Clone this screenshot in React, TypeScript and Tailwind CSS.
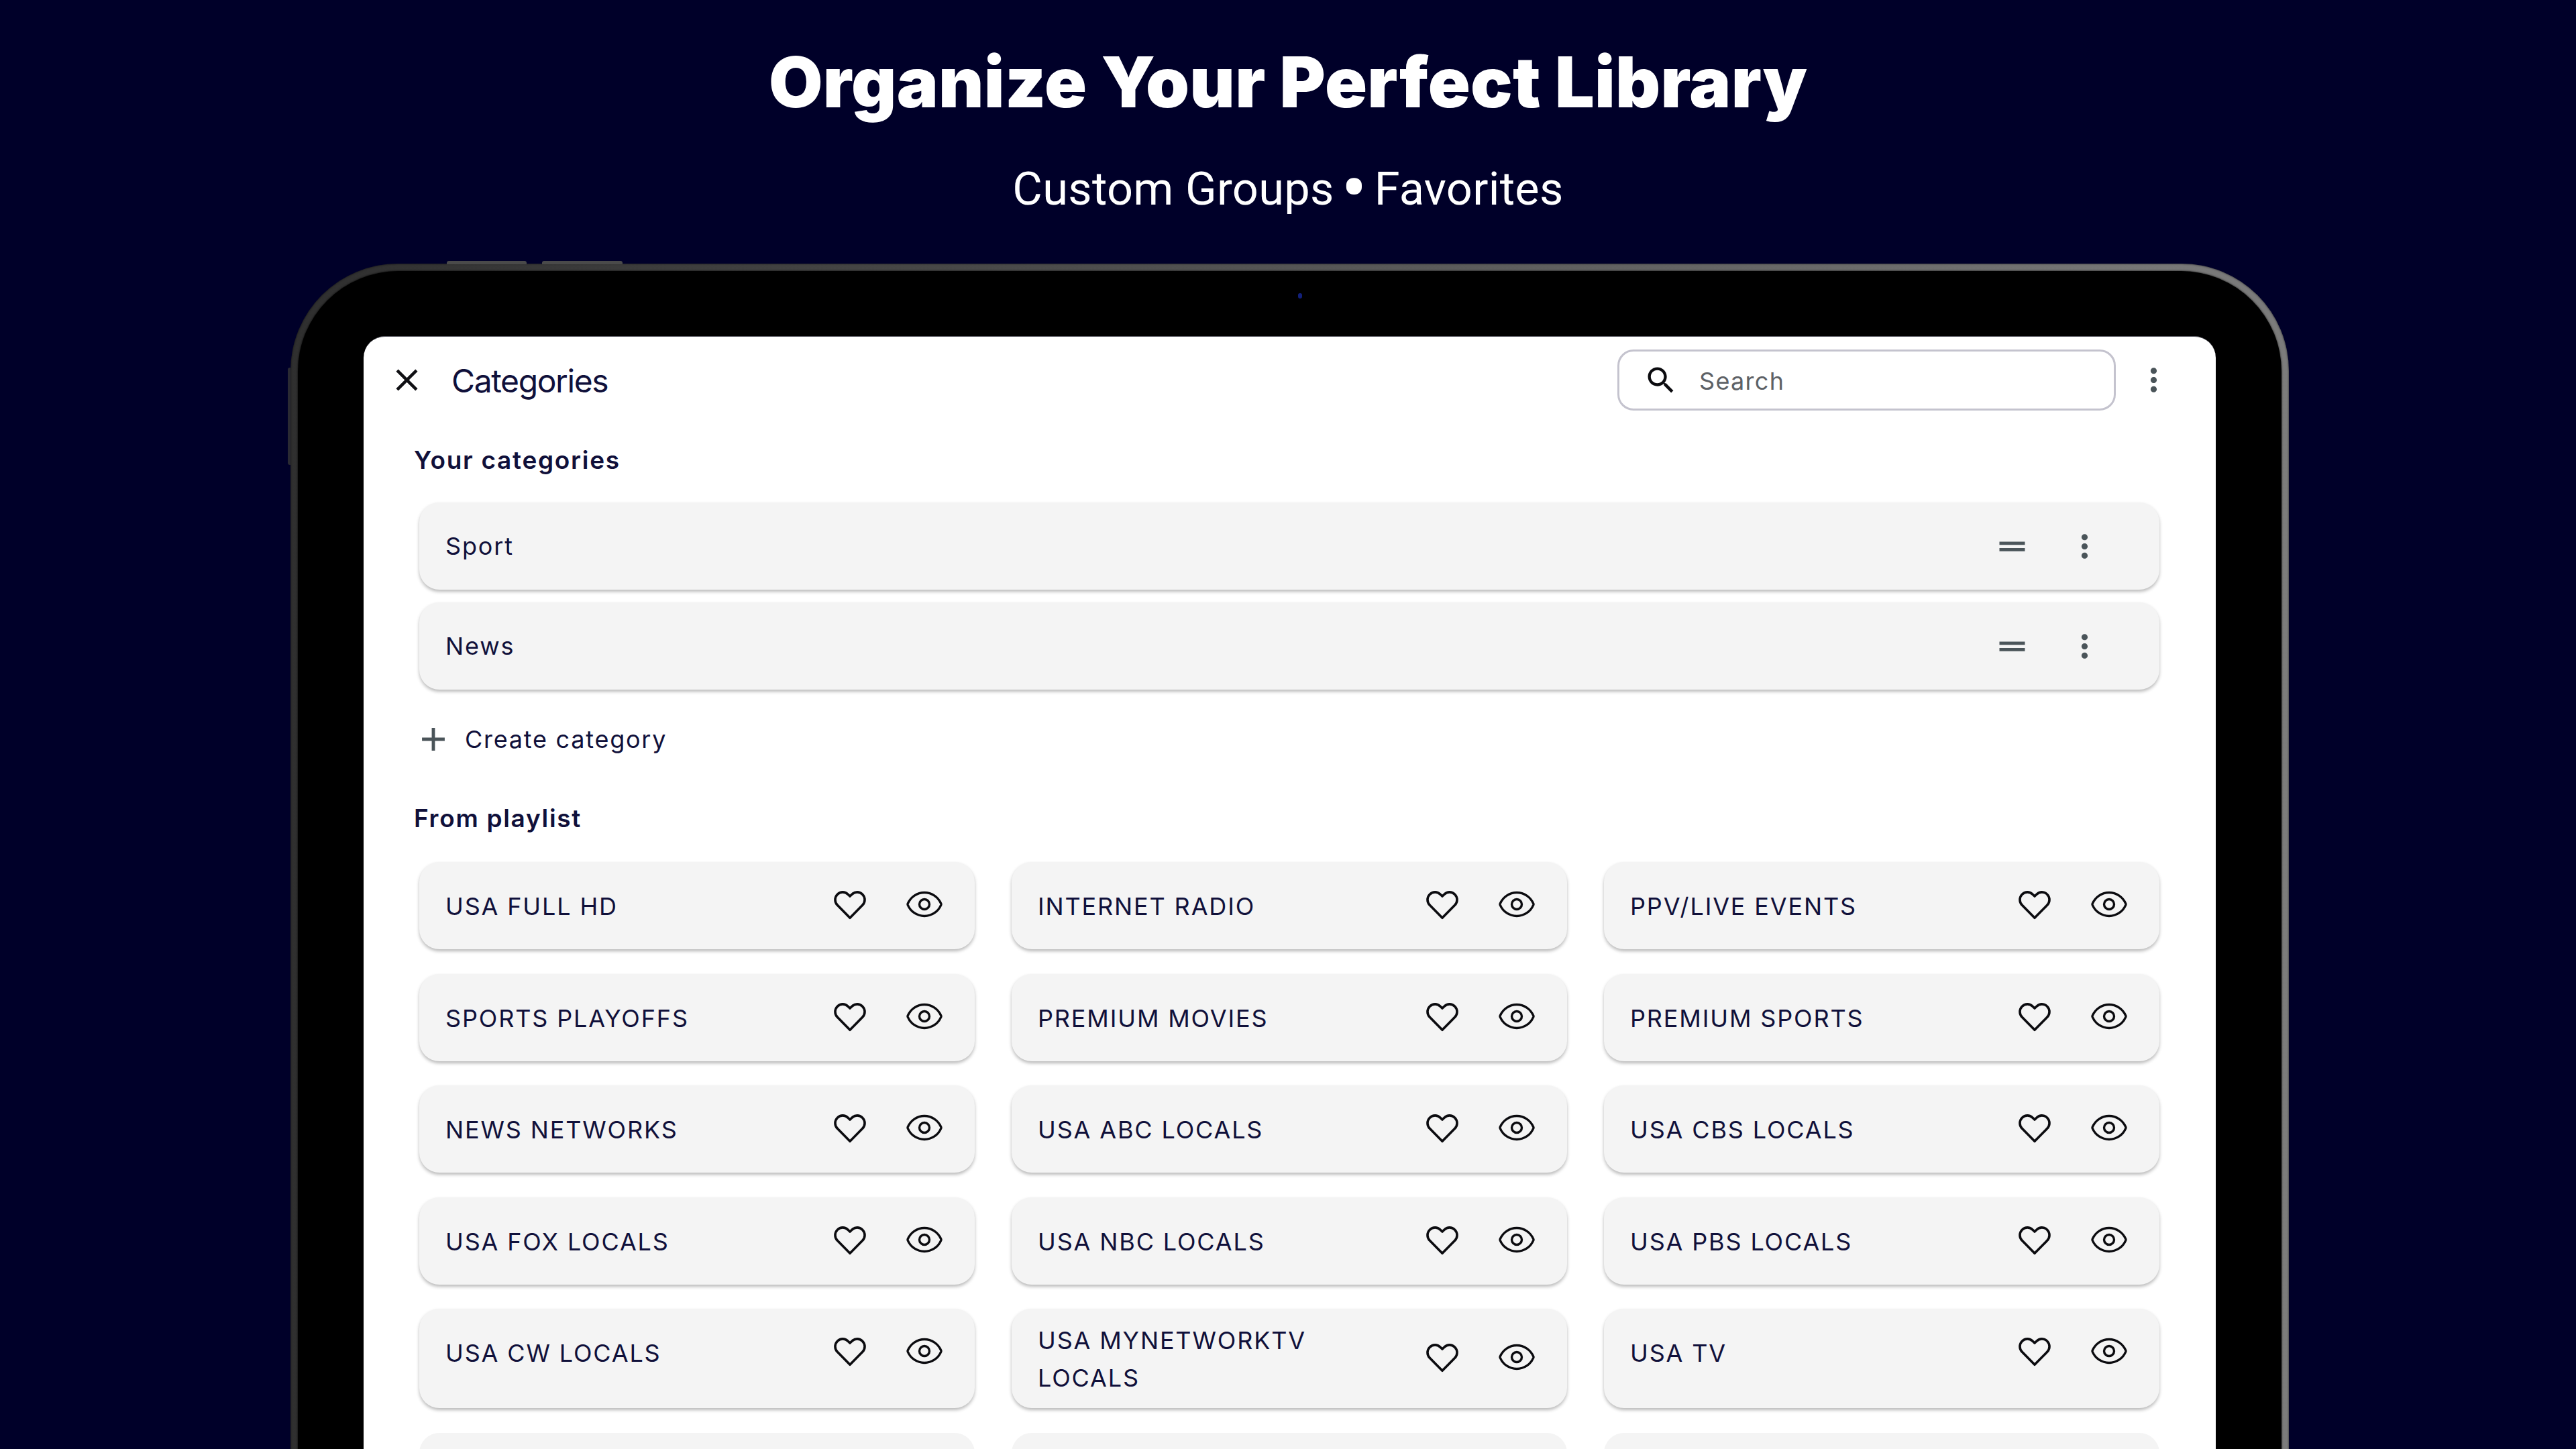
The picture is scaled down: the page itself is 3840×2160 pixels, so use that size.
import React from "react";

const rows = [
  ["USA FULL HD", "INTERNET RADIO", "PPV/LIVE EVENTS"],
  ["SPORTS PLAYOFFS", "PREMIUM MOVIES", "PREMIUM SPORTS"],
  ["NEWS NETWORKS", "USA ABC LOCALS", "USA CBS LOCALS"],
  ["USA FOX LOCALS", "USA NBC LOCALS", "USA PBS LOCALS"],
  ["USA CW LOCALS", "USA MYNETWORKTV LOCALS", "USA TV"],
];

const MoreVert = () => (
  <svg viewBox="0 0 24 24" className="w-[55px] h-[55px] fill-[#4a5459]">
    <path d="M12 8c1.1 0 2-.9 2-2s-.9-2-2-2-2 .9-2 2 .9 2 2 2zm0 2c-1.1 0-2 .9-2 2s.9 2 2 2 2-.9 2-2-.9-2-2-2zm0 6c-1.1 0-2 .9-2 2s.9 2 2 2 2-.9 2-2-.9-2-2-2z" />
  </svg>
);

const Heart = () => (
  <svg viewBox="0 0 24 24" className="w-[54px] h-[54px] -mt-[4px] fill-none stroke-[#0b0b0f] stroke-[1.6]" strokeLinejoin="round">
    <path d="M12 21 3.7 12.6a5.1 5.1 0 0 1 0-7.2 4.9 4.9 0 0 1 7 0L12 6.7l1.3-1.3a4.9 4.9 0 0 1 7 0 5.1 5.1 0 0 1 0 7.2Z" />
  </svg>
);

const Eye = () => (
  <svg viewBox="0 0 24 24" className="w-[60px] h-[60px] -mt-[4px] fill-none stroke-[#0b0b0f] stroke-[1.35]">
    <path d="M2.062 12.348a1 1 0 0 1 0-.696 10.75 10.75 0 0 1 19.876 0 1 1 0 0 1 0 .696 10.75 10.75 0 0 1-19.876 0" />
    <circle cx="12" cy="12" r="3" />
  </svg>
);

const UserRow = ({ name }: { name: string }) => (
  <div className="h-[130px] bg-[#f4f4f4] rounded-[30px] shadow-[0_3px_5px_rgba(0,0,0,0.28)] flex items-center pl-[39px] pr-[84px]">
    <span className="flex-1 text-[36px] leading-[48px] tracking-[1.85px] text-[#10103a]">{name}</span>
    <svg viewBox="0 0 24 24" className="w-[57px] h-[57px] fill-[#4a5459] mr-[52px]">
      <path d="M20 9H4v2h16V9zM4 15h16v-2H4v2z" />
    </svg>
    <MoreVert />
  </div>
);

const PlaylistCard = ({ name }: { name: string }) => {
  const tall = name.length > 20;
  return (
    <div className="bg-[#f4f4f4] rounded-[30px] shadow-[0_3px_5px_rgba(0,0,0,0.28)] flex items-start pl-[39px] pr-[45px]">
      <div className={tall ? "flex items-center flex-1 h-[148px]" : "flex items-center flex-1 h-[130px]"}>
        <span className="flex-1 mt-[2px] text-[36px] leading-[56px] tracking-[1.85px] text-[#10103a] pr-[120px]">{name}</span>
        <Heart />
        <span className="w-[54px]" />
        <Eye />
      </div>
    </div>
  );
};

export default function App() {
  return (
    <div className="w-[3840px] h-[2160px] overflow-hidden bg-[#000029] font-['Inter',sans-serif]">
      {/* headline */}
      <div className="pt-[60px] flex flex-col items-center">
        <h1 className="text-[104px] leading-[124px] font-black tracking-[0.3px] text-white">Organize Your Perfect Library</h1>
        <p className="mt-[58px] text-[68.5px] leading-[80px] tracking-[0.3px] text-white font-['Roboto',sans-serif]">
          Custom Groups <span className="relative top-[16px] -mx-[7px] text-[116px] leading-[0]">•</span> Favorites
        </p>
      </div>

      {/* tablet */}
      <div className="relative mt-[71px] ml-[433px] w-[2979px] rounded-t-[160px] p-[11px] pb-0 bg-gradient-to-r from-[#2f2f2f] via-[#555555] to-[#7c7c7c] shadow-[inset_0_0_3px_rgba(0,0,0,0.7)]">
        <span className="absolute top-[-4px] left-[233px] w-[119px] h-[5px] rounded-t-[3px] bg-[#4a4a4a]" />
        <span className="absolute top-[-4px] left-[375px] w-[120px] h-[5px] rounded-t-[3px] bg-[#4a4a4a]" />
        <span className="absolute top-[155px] left-[-4px] w-[4px] h-[145px] rounded-l-[3px] bg-[#2a2a33]" />

        <div className="relative bg-black rounded-t-[150px] px-[98px] pt-[97px] shadow-[0_0_3px_rgba(0,0,0,0.9)]">
          <span className="absolute top-[33px] left-[1491px] w-[6px] h-[8px] rounded-full bg-[#12207a]" />

          {/* screen */}
          <div className="bg-white rounded-t-[32px] pt-[19px] pb-[60px] border-t border-[#55555f]">
            {/* top bar */}
            <div className="flex items-center h-[91px] pl-[37px] pr-[65px]">
              <svg viewBox="0 0 24 24" className="w-[55px] h-[55px] fill-[#101014]">
                <path d="M19 6.41L17.59 5 12 10.59 6.41 5 5 6.41 10.59 12 5 17.59 6.41 19 12 13.41 17.59 19 19 17.59 13.41 12z" />
              </svg>
              <span className="ml-[39px] mt-[2px] flex-1 text-[48px] tracking-[-1.4px] text-[#10103a]">Categories</span>
              <div className="w-[743px] h-[91px] border-[3px] border-[#c4c3ce] rounded-[24px] flex items-center pl-[36px]">
                <svg viewBox="0 0 24 24" className="w-[52px] h-[52px] fill-[#0b0b0f]">
                  <path d="M15.5 14h-.79l-.28-.27C15.41 12.59 16 11.11 16 9.5 16 5.91 13.09 3 9.5 3S3 5.91 3 9.5 5.91 16 9.5 16c1.61 0 3.09-.59 4.23-1.57l.27.28v.79l5 4.99L20.49 19l-4.99-5zm-6 0C7.01 14 5 11.99 5 9.5S7.01 5 9.5 5 14 7.01 14 9.5 11.99 14 9.5 14z" />
                </svg>
                <span className="ml-[31px] mt-[2px] text-[36px] tracking-[1.3px] text-[#5d6166]">Search</span>
              </div>
              <div className="ml-[29px]">
                <MoreVert />
              </div>
            </div>

            <div className="pl-[75px] pr-[84px]">
              <h2 className="mt-[49px] text-[37px] leading-[50px] font-semibold tracking-[1.7px] text-[#10103a]">Your categories</h2>

              <div className="mt-[38px] ml-[8px] flex flex-col gap-[19px]">
                <UserRow name="Sport" />
                <UserRow name="News" />
              </div>

              <div className="mt-[44px] h-[60px] flex items-center">
                <svg viewBox="0 0 24 24" className="w-[58px] h-[58px] fill-[#4a5459]">
                  <path d="M19 13h-6v6h-2v-6H5v-2h6V5h2v6h6v2z" />
                </svg>
                <span className="ml-[18px] text-[36px] tracking-[1.75px] text-[#10103a]">Create category</span>
              </div>

              <h2 className="mt-[63px] text-[37px] leading-[50px] font-semibold tracking-[1.7px] text-[#10103a]">From playlist</h2>

              <div className="mt-[40px] ml-[8px] grid grid-cols-3 gap-x-[55px] gap-y-[36.6px]">
                {rows.flat().map((name) => (
                  <PlaylistCard key={name} name={name} />
                ))}
                <div className="h-[131px] bg-[#f4f4f4] rounded-[30px]" />
                <div className="h-[131px] bg-[#f4f4f4] rounded-[30px]" />
                <div className="h-[131px] bg-[#f4f4f4] rounded-[30px]" />
              </div>
            </div>
          </div>
        </div>
      </div>
    </div>
  );
}
